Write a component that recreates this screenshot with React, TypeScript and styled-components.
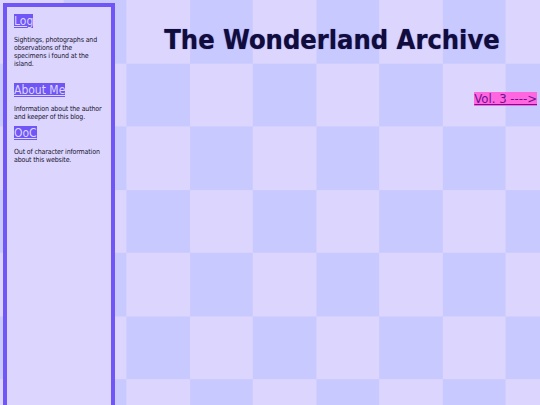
import React from "react";
import styled, { createGlobalStyle } from "styled-components";

const GlobalStyle = createGlobalStyle`
  html, body {
    margin: 0;
    padding: 0;
    height: 100%;
    overflow: hidden;
  }
  body {
    font-family: "DejaVu Sans Condensed", "DejaVu Sans", sans-serif;
    background-color: #dcd6fe;
    background-image: conic-gradient(
      #c8c9fe 0 25%,
      #dcd6fe 0 50%,
      #c8c9fe 0 75%,
      #dcd6fe 0
    );
    background-size: 126.4px 126.4px;
  }
`;

const Page = styled.div`
  display: flex;
  align-items: flex-start;
  min-height: 100vh;
`;

const Sidebar = styled.nav`
  box-sizing: border-box;
  flex: 0 0 112px;
  margin: 3px 0 0 3px;
  min-height: calc(100vh + 10px);
  padding: 7px 7px;
  background: #dcd6fe;
  border: 4px solid #7055f7;
`;

const Section = styled.section<{ $gap?: number }>`
  font-size: 12px;
  line-height: 14px;
  margin-bottom: ${(p) => p.$gap ?? 10}px;
`;

const NavLink = styled.a`
  font-size: 12px;
  line-height: 14px;
  color: #dcd6fe;
  background: #7055f7;
  text-decoration: underline;
`;

const Blurb = styled.p`
  margin: 8px 0 0;
  font-size: 7px;
  line-height: 8px;
  letter-spacing: -0.15px;
  color: #1a1530;
`;

const Main = styled.main`
  flex: 1;
  padding: 0 3px 0 12px;
`;

const Title = styled.h1`
  margin: 24px 0 0;
  text-align: center;
  font-size: 27px;
  font-weight: bold;
  color: #100c3c;
  text-shadow: 0 0 1px #5a4fb0;
`;

const NextRow = styled.div`
  display: flex;
  justify-content: flex-end;
  margin-top: 37px;
`;

const NextLink = styled.a`
  font-size: 13px;
  line-height: 14px;
  color: #6e1490;
  background: #ff66e0;
  text-decoration: underline;
`;

export default function App() {
  return (
    <>
      <GlobalStyle />
      <Page>
        <Sidebar>
          <Section $gap={15}>
            <NavLink href="#">Log</NavLink>
            <Blurb>
              Sightings, photographs and
              <br />
              observations of the
              <br />
              specimens i found at the
              <br />
              island.
            </Blurb>
          </Section>
          <Section $gap={5}>
            <NavLink href="#">About Me</NavLink>
            <Blurb>
              Information about the author
              <br />
              and keeper of this blog.
            </Blurb>
          </Section>
          <Section>
            <NavLink href="#">OoC</NavLink>
            <Blurb>
              Out of character information
              <br />
              about this website.
            </Blurb>
          </Section>
        </Sidebar>
        <Main>
          <Title>The Wonderland Archive</Title>
          <NextRow>
            <NextLink href="#">Vol. 3 ----&gt;</NextLink>
          </NextRow>
        </Main>
      </Page>
    </>
  );
}
